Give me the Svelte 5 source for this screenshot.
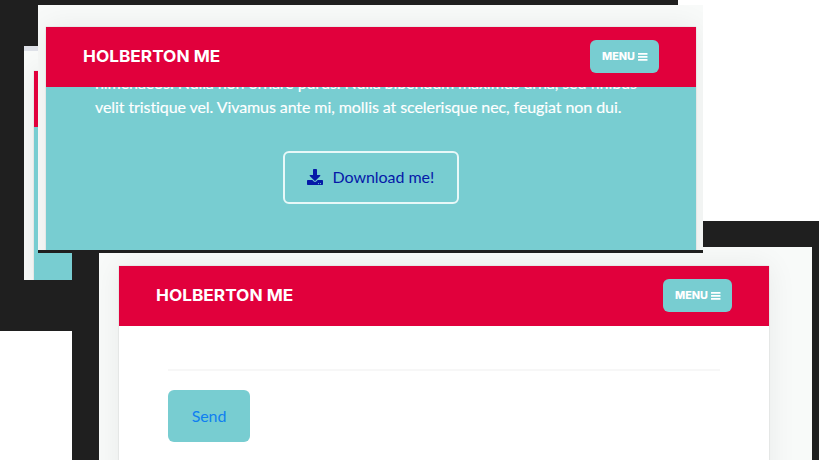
<script>
  const bars = [0, 3, 6];
</script>

{#snippet navbar()}
  <header class="navbar">
    <span class="brand">HOLBERTON ME</span>
    <button class="menu">
      <span class="menu-label"><span>MENU</span></span>
      <svg width="10" height="8" viewBox="0 0 10 8" aria-hidden="true">
        {#each bars as y}
          <rect x="0" {y} width="9.500" height="1.800" rx=".3" fill="#fff" />
        {/each}
      </svg>
    </button>
  </header>
{/snippet}

<main class="desktop">
  <div class="backdrop upper"></div>
  <div class="backdrop lower"></div>

  <section class="window rear">
    <div class="page">
      <div class="rear-nav"></div>
    </div>
  </section>

  <section class="window contact">
    <div class="page">
      {@render navbar()}
      <div class="form">
        <hr />
        <button class="send">Send</button>
      </div>
    </div>
  </section>

  <section class="window about">
    <div class="page">
      {@render navbar()}
      <div class="copy">
        <p>
          <span>himenaeos. Nulla non ornare purus. Nulla bibendum maximus urna, sed finibus</span><br />
          <span>velit tristique vel. Vivamus ante mi, mollis at scelerisque nec, feugiat non dui.</span>
        </p>
        <button class="download">
          <svg width="16" height="16" viewBox="0 0 512 512" aria-hidden="true">
            <path fill="#0519a8" d="M216 0h80c13.300 0 24 10.700 24 24v168h87.700c17.800 0 26.700 21.500 14.100 34.100L269.700 378.300c-7.500 7.500-19.800 7.500-27.300 0L90.100 226.100c-12.600-12.600-3.700-34.100 14.100-34.100H192V24c0-13.300 10.700-24 24-24zm296 376v112c0 13.300-10.700 24-24 24H24c-13.300 0-24-10.700-24-24V376c0-13.300 10.700-24 24-24h146.700l49 49c20.100 20.100 52.500 20.100 72.600 0l49-49H488c13.300 0 24 10.700 24 24zm-124 88c0-11-9-20-20-20s-20 9-20 20 9 20 20 20 20-9 20-20zm64 0c0-11-9-20-20-20s-20 9-20 20 9 20 20 20 20-9 20-20z" />
          </svg>
          <span>Download me!</span>
        </button>
      </div>
    </div>
  </section>
</main>

<style>
  :global(body) {
    margin: 0;
    background: #fff;
  }
  .desktop {
    position: relative;
    width: 819px;
    height: 460px;
    overflow: hidden;
    background: #fff;
    font-family: Lato, sans-serif;
    font-size: 16px;
    font-variant-ligatures: none;
  }
  .desktop * {
    box-sizing: border-box;
  }
  .backdrop {
    position: absolute;
    background: #1f1f1f;
  }
  .upper {
    left: 0;
    top: 0;
    width: 678px;
    height: 331px;
  }
  .lower {
    left: 72px;
    top: 221px;
    width: 747px;
    height: 239px;
  }
  .window {
    position: absolute;
    overflow: hidden;
    background: #f8faf9;
  }
  .page {
    box-shadow: 0 0 1px rgba(0, 0, 0, 0.25), 0 0 28px rgba(0, 0, 0, 0.07);
  }
  .rear {
    left: 24px;
    top: 46px;
    width: 48px;
    height: 234px;
    border-top: 5px solid #dee1e8;
    padding: 20px 0 0 10px;
  }
  .rear .page {
    height: 220px;
    background: #78cdd1;
  }
  .rear-nav {
    height: 56px;
    background: #e1003c;
  }
  .contact {
    left: 99px;
    top: 247px;
    width: 713px;
    height: 213px;
    padding: 19px 43px 0 20px;
  }
  .contact .page {
    height: 240px;
    background: #fff;
  }
  .about {
    left: 38px;
    top: 5px;
    width: 665px;
    height: 248px;
    border-bottom: 3px solid #1f1f1f;
    padding: 22px 7px 0 8px;
  }
  .about .page {
    height: 260px;
    background: #78cdd1;
  }
  .navbar {
    position: relative;
    z-index: 1;
    height: 60px;
    padding: 0 37px 1px;
    display: flex;
    align-items: center;
    justify-content: space-between;
    background: #e1003c;
    color: #fff;
  }
  .brand {
    font: 700 16px/20px Inter, sans-serif;
    white-space: nowrap;
    padding-bottom: 2px;
    transform: scaleX(1.078);
    transform-origin: left center;
  }
  button {
    font: inherit;
    display: flex;
    align-items: center;
    margin: 0;
    border-radius: 6px;
    white-space: nowrap;
    background: #78cdd1;
  }
  .menu {
    width: 69px;
    height: 33px;
    padding: 0 0 0 11px;
    gap: 2px;
    border: 0;
    color: #fff;
  }
  .menu-label {
    font: 800 10.500px/16px Inter, sans-serif;
    width: 34.500px;
  }
  .menu-label span {
    display: inline-block;
    transform: scaleX(1.03);
    transform-origin: left center;
  }
  .form {
    padding: 43px 49px 0;
  }
  hr {
    margin: 0;
    border: 0;
    height: 2px;
    background: #f7f7f7;
  }
  .send {
    width: 82px;
    height: 52.500px;
    justify-content: center;
    border: 0;
    margin-top: 18.500px;
    padding-bottom: 2px;
    letter-spacing: -0.1px;
    color: #0f7ff0;
  }
  .copy {
    padding: 0 49px;
    margin-top: -16px;
    color: #fff;
    display: flex;
    flex-direction: column;
  }
  p {
    margin: 0;
    line-height: 24px;
    white-space: nowrap;
    letter-spacing: -0.085px;
    -webkit-text-stroke: 0.15px #fff;
  }
  .download {
    width: 176px;
    height: 53px;
    margin: 31.500px 0 0 187.500px;
    padding: 0 0 1px 22px;
    gap: 10px;
    border: 2px solid #e8f8f8;
    letter-spacing: -0.05px;
    color: #0519a8;
  }
</style>
